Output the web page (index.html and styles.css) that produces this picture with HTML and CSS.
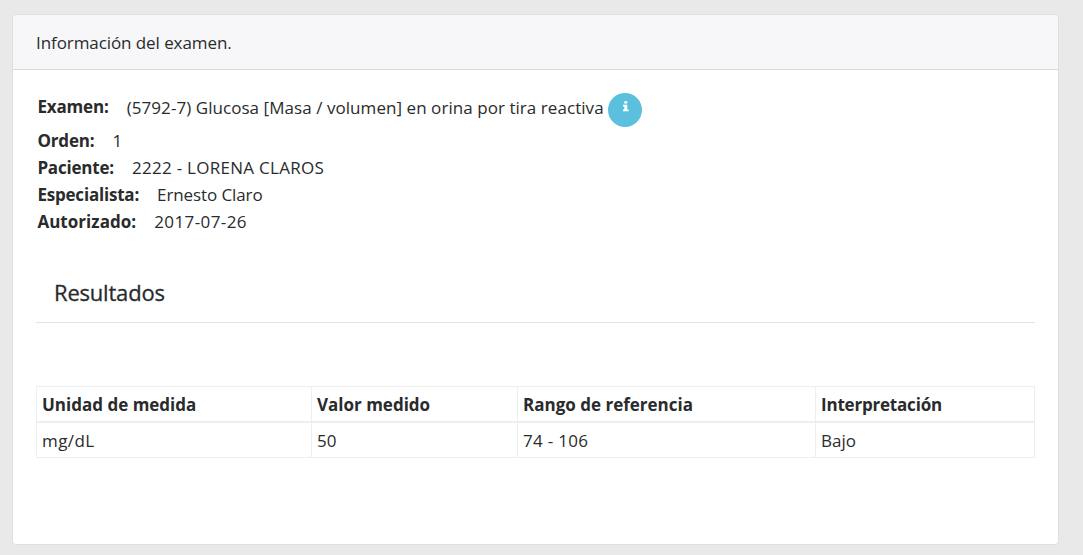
FILE: index.html
```html
<!DOCTYPE html>
<html lang="es">
<head>
<meta charset="utf-8">
<title>Información del examen</title>
<link rel="stylesheet" href="styles.css">
</head>
<body>
<section class="card">
  <header class="card-header">Información del examen.</header>
  <div class="card-body">
    <dl class="details">
      <div class="row row-exam"><dt>Examen:</dt><dd>(5792-7) Glucosa [Masa / volumen] en orina por tira reactiva</dd>
        <dd><button class="info" aria-label="Info"><svg width="8" height="11" viewBox="0 0 8 11"><path fill="#fff" d="M2.3 0.2h2.9v2.4H2.3zM1 3.8h4.2v4.6h1.3v1.8H1V8.4h1.3V5.6H1z"/></svg></button></dd></div>
      <div class="row row-order"><dt>Orden:</dt><dd>1</dd></div>
      <div class="row row-patient"><dt>Paciente:</dt><dd>2222 - LORENA CLAROS</dd></div>
      <div class="row row-doctor"><dt>Especialista:</dt><dd>Ernesto Claro</dd></div>
      <div class="row row-date"><dt>Autorizado:</dt><dd>2017-07-26</dd></div>
    </dl>
    <h2 class="title">Resultados</h2>
    <table class="results">
      <colgroup><col class="c1"><col class="c2"><col class="c3"><col class="c4"></colgroup>
      <thead><tr><th>Unidad de medida</th><th>Valor medido</th><th>Rango de referencia</th><th class="interp">Interpretación</th></tr></thead>
      <tbody><tr><td class="unit">mg/dL</td><td>50</td><td class="range">74 - 106</td><td>Bajo</td></tr></tbody>
    </table>
  </div>
</section>
</body>
</html>
```
FILE: styles.css
```css
* { box-sizing: border-box; }
body { margin: 0; padding: 14px 24px 10px 12px; height: 555px; background: #e9e9e9; color: #292b2c; font: 17px/27px "Segoe UI", "Open Sans", sans-serif; overflow: hidden; }
.card { height: 531px; background: #fff; border: 1px solid #dedfdf; border-radius: 4px; overflow: hidden; }
.card-header { height: 55px; padding: 14px 23px; background: #f7f7f9; border-bottom: 1px solid #d8d9da; letter-spacing: -0.08px; }
.card-body { padding: 23px; }
.details { margin: 0 0 0 1.4px; }
.row { display: flex; height: 27px; white-space: nowrap; }
dt { font-weight: 700; margin-right: 18px; }
dd { margin: 0; }
.row-exam { height: 34px; letter-spacing: 0.055px; }
.row-exam dt { letter-spacing: -0.15px; }
.row-exam dd { padding-top: 1px; }
.row-exam dd + dd { padding: 0; }
.row-order dt { letter-spacing: -0.15px; }
.row-patient dt { letter-spacing: -0.2px; }
.row-patient dd { letter-spacing: 0.28px; }
.row-doctor dt { letter-spacing: -0.2px; }
.row-doctor dd { letter-spacing: -0.1px; }
.row-date dt { letter-spacing: 0.04px; }
.row-date dd { letter-spacing: 0.4px; }
.info { width: 34px; height: 34px; margin-left: 4.6px; padding: 0 0 7px 1px; border: 0; border-radius: 50%; background: #5bc0de; display: flex; align-items: center; justify-content: center; }
.title { margin: 35px 0 63px; height: 53px; padding: 7px 18px; border-bottom: 1px solid #e2e2e2; font-size: 22px; line-height: 30px; font-weight: 500; letter-spacing: -0.2px; -webkit-text-stroke: 0.3px currentColor; }
.results { width: 999px; table-layout: fixed; border-collapse: collapse; }
.c1 { width: 275px; }
.c2 { width: 206px; }
.c3 { width: 298px; }
.c4 { width: 219px; }
th, td { height: 36px; padding: 2px 5px 0; border: 1px solid #eceeef; text-align: left; line-height: 27px; }
th { height: 35px; border-bottom-width: 2px; }
.interp { letter-spacing: -0.2px; }
.unit { letter-spacing: 0.4px; }
.range { letter-spacing: 0.3px; }
```
